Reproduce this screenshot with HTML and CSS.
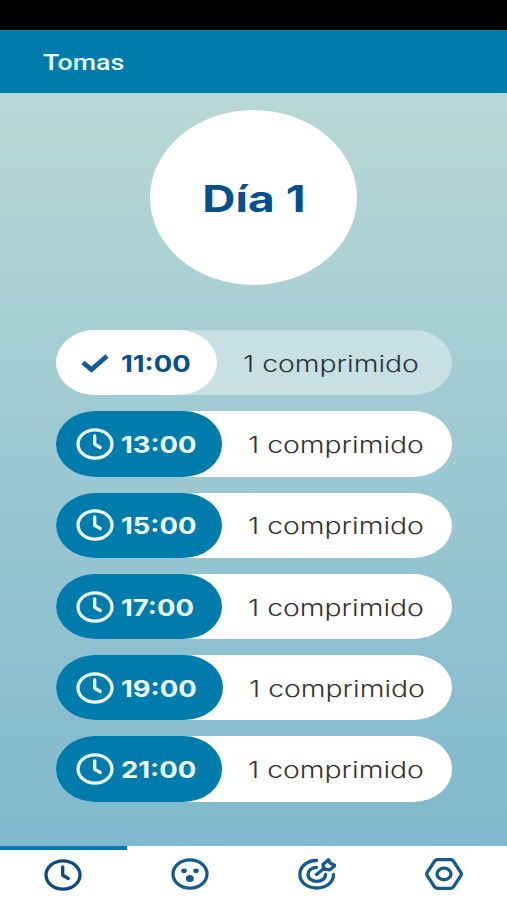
FILE: index.html
```html
<!DOCTYPE html>
<html lang="es">
<head>
    <meta charset="UTF-8">
    <meta name="viewport" content="width=device-width, initial-scale=1.0">
    <title>Tomas</title>
    <link rel="stylesheet" href="styles.css">
</head>
<body>
    <!-- Iconos compartidos -->
    <svg class="sprite" width="0" height="0">
        <symbol id="clock" viewBox="0 0 38 32" preserveAspectRatio="none">
            <ellipse cx="19" cy="16" rx="17" ry="14.2"/>
            <path d="M18.700 8V16.300L24.300 19.500"/>
        </symbol>
    </svg>

    <div class="status-bar"></div>

    <header class="top-bar">
        <h1>Tomas</h1>
    </header>

    <main>
        <div class="day"><span>Día 1</span></div>

        <ul class="doses">
            <li class="dose done">
                <div class="time">
                    <svg class="check" viewBox="0 0 28 20"><path d="M2 9.5L10.5 16.5L26 3"/></svg>
                    <span>11:00</span>
                </div>
                <p>1 comprimido</p>
            </li>
            <li class="dose">
                <div class="time"><svg class="icon"><use href="#clock"/></svg><span>13:00</span></div>
                <p>1 comprimido</p>
            </li>
            <li class="dose">
                <div class="time"><svg class="icon"><use href="#clock"/></svg><span>15:00</span></div>
                <p>1 comprimido</p>
            </li>
            <li class="dose">
                <div class="time"><svg class="icon"><use href="#clock"/></svg><span>17:00</span></div>
                <p>1 comprimido</p>
            </li>
            <li class="dose wide">
                <div class="time"><svg class="icon"><use href="#clock"/></svg><span>19:00</span></div>
                <p>1 comprimido</p>
            </li>
            <li class="dose">
                <div class="time"><svg class="icon"><use href="#clock"/></svg><span>21:00</span></div>
                <p>1 comprimido</p>
            </li>
        </ul>
    </main>

    <nav class="tabs">
        <a class="tab active"><svg class="icon"><use href="#clock"/></svg></a>
        <a class="tab">
            <svg class="icon" viewBox="0 0 38 32">
                <ellipse cx="19" cy="16" rx="17" ry="14.2"/>
                <g class="fill">
                    <ellipse cx="13" cy="12.8" rx="2.8" ry="2.3"/>
                    <ellipse cx="25" cy="12.8" rx="2.8" ry="2.3"/>
                    <ellipse cx="18.8" cy="20.6" rx="4" ry="3.5"/>
                </g>
            </svg>
        </a>
        <a class="tab">
            <svg class="icon" viewBox="0 0 38 32">
                <path d="M18.500 2.500C9.500 2.200 1.800 8.500 1.800 16.500C1.800 24.400 9.500 30 18.800 30C28 30 35.500 24.500 35.500 16.500"/>
                <path d="M18.500 9.300C13.500 9.300 10 12.500 10 16.500C10 20.500 14 23.300 18.800 23.300C23.800 23.300 27.500 20.500 27.500 16.500"/>
                <path d="M18.500 16.500L26.500 10M25.500 11L25 6.500L30.500 1.800L32 5L37 7.500L32 11.800Z"/>
            </svg>
        </a>
        <a class="tab">
            <svg class="icon" viewBox="0 0 38 32">
                <path d="M12.500 1.700H25.500Q27.500 1.700 28.600 3.400L35.800 14.300Q36.800 16 35.800 17.700L28.600 28.600Q27.500 30.300 25.500 30.300H12.500Q10.500 30.300 9.400 28.600L2.200 17.700Q1.200 16 2.200 14.300L9.400 3.400Q10.500 1.700 12.500 1.700Z"/>
                <ellipse cx="19" cy="16" rx="7" ry="5.800"/>
            </svg>
        </a>
    </nav>
</body>
</html>
```

FILE: styles.css
```css
* {
    box-sizing: border-box;
}

body {
    margin: 0;
    height: 900px;
    display: flex;
    flex-direction: column;
    font-family: Inter, "Liberation Sans", sans-serif;
    background-color: #fff;
    overflow: hidden;
}

.sprite {
    display: none;
}

/* Cabecera */
.status-bar {
    height: 30px;
    background-color: #000;
}

.top-bar {
    height: 63px;
    padding-left: 43px;
    display: flex;
    align-items: center;
    background-color: #007cac;
}

h1 {
    margin: 0;
    font-family: Roboto, sans-serif;
    font-size: 22.5px;
    font-weight: 500;
    color: #e4faff;
    transform: scaleX(1.19);
    transform-origin: left;
}

/* Contenido */
main {
    height: 753px;
    padding-top: 17px;
    display: flex;
    flex-direction: column;
    align-items: center;
    background: linear-gradient(#b9d8d5, #a4cdd3 36%, #7fb8cd);
}

.day {
    width: 207px;
    height: 175px;
    display: flex;
    align-items: center;
    justify-content: center;
    border-radius: 50%;
    background-color: #fff;
}

.day span {
    padding-top: 2px;
    font-size: 36.5px;
    font-weight: 700;
    color: #044f8c;
    white-space: nowrap;
    transform: scaleX(1.26);
}

/* Lista de tomas */
.doses {
    width: 396px;
    margin: 45px 0 0;
    padding: 0;
    display: flex;
    flex-direction: column;
    gap: 16px;
    list-style: none;
}

.dose {
    height: 65.3px;
    display: flex;
    align-items: center;
    border-radius: 39px / 32.6px;
    background-color: #fff;
}

.time {
    width: 166px;
    height: 100%;
    padding-left: 20px;
    display: flex;
    align-items: center;
    border-radius: 39px / 32.6px;
    background-color: #007cac;
    color: #effcff;
}

.time span {
    margin-left: 7px;
    padding-top: 2px;
    font-size: 23px;
    font-weight: 700;
    transform: scaleX(1.19);
    transform-origin: left;
}

.dose p {
    margin: 0 0 0 26px;
    padding-top: 1px;
    font-size: 22.5px;
    font-weight: 300;
    color: #333;
    white-space: nowrap;
    transform: scaleX(1.26);
    transform-origin: left;
}

.wide .time {
    width: 167.5px;
}

.done {
    background-color: #c8dfe4;
}

.done .time {
    width: 161px;
    padding-left: 25px;
    background-color: #fff;
    color: #044f8c;
}

.done .time span {
    margin-left: 12px;
}

.done p {
    color: #24363c;
}

/* Iconos */
.icon {
    width: 38px;
    height: 32px;
    flex: none;
    fill: none;
    stroke: currentColor;
    stroke-width: 3.3;
    stroke-linecap: round;
    stroke-linejoin: round;
}

.icon .fill {
    fill: currentColor;
    stroke: none;
}

.check {
    width: 28px;
    height: 20px;
    fill: none;
    stroke: #135b98;
    stroke-width: 4.8;
}

/* Barra inferior */
.tabs {
    height: 54px;
    display: grid;
    grid-template-columns: repeat(4, 1fr);
    color: #135b8f;
}

.tab {
    display: flex;
    justify-content: center;
    padding-top: 12px;
}

.tab.active {
    border-top: 4px solid #087ba8;
    padding-top: 9px;
    color: #064c82;
}
```
